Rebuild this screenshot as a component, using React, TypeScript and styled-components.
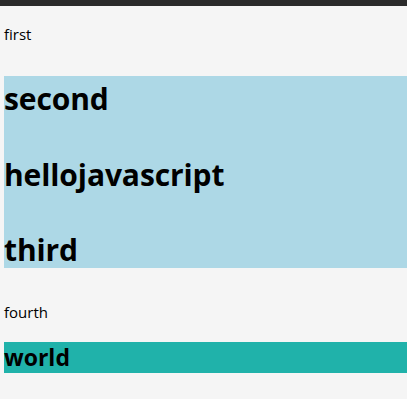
import styled, { createGlobalStyle } from "styled-components";

const GlobalStyle = createGlobalStyle`
  html, body {
    margin: 0;
    padding: 0;
    background-color: #f5f5f5;
    font-family: "Open Sans", "Liberation Sans", sans-serif;
    color: #000;
  }
`;

const TopBar = styled.div`
  height: 6px;
  background-color: #2b2b2b;
`;

const Page = styled.div`
  padding-left: 4px;
  display: flex;
  flex-direction: column;
`;

const Text = styled.p<{ $top: number }>`
  margin: ${(p) => p.$top}px 0 0 0;
  font-size: 15px;
  line-height: 22px;
`;

const BlueBlock = styled.div`
  margin-top: 31px;
  padding-top: 4px;
  background-color: #add8e6;
  display: flex;
  flex-direction: column;
  gap: 38.5px;
`;

const Heading = styled.h1`
  margin: 0;
  font-size: 30px;
  line-height: 37px;
  font-weight: 700;
  letter-spacing: -0.1px;
`;

const TealBlock = styled.div`
  margin-top: 19.5px;
  background-color: #20b2aa;
`;

const SubHeading = styled.h2`
  margin: 0;
  font-size: 23px;
  line-height: 31px;
  font-weight: 700;
`;

export default function App() {
  return (
    <>
      <GlobalStyle />
      <TopBar />
      <Page>
        <Text $top={17}>first</Text>
        <BlueBlock>
          <Heading>second</Heading>
          <Heading>hellojavascript</Heading>
          <Heading>third</Heading>
        </BlueBlock>
        <Text $top={32.5}>fourth</Text>
        <TealBlock>
          <SubHeading>world</SubHeading>
        </TealBlock>
      </Page>
    </>
  );
}
